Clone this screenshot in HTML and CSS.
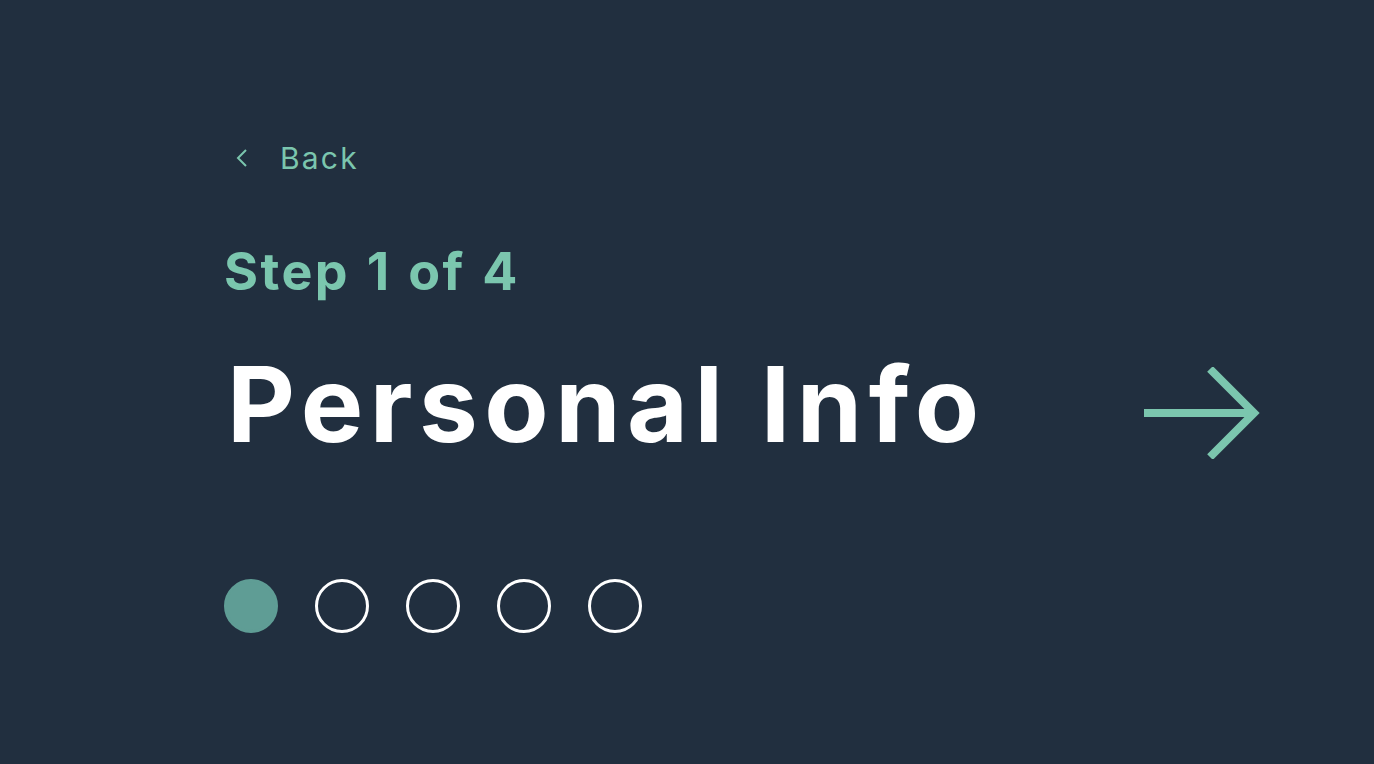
FILE: index.html
```html
<!DOCTYPE html>
<html lang="en">
<head>
<meta charset="utf-8">
<title>Step 1 of 4 - Personal Info</title>
<link rel="stylesheet" href="styles.css">
</head>
<body>
<main class="screen">
  <a class="back" href="#">
    <svg class="back-icon" viewBox="0 0 14 20" width="14" height="20" aria-hidden="true">
      <path d="M11 2 L3 10 L11 18" fill="none" stroke="currentColor" stroke-width="2"/>
    </svg>
    <span class="back-label">Back</span>
  </a>
  <p class="step">Step 1 of 4</p>
  <div class="title-row">
    <h1 class="title">Personal Info</h1>
    <a class="next" href="#" aria-label="Next">
      <svg viewBox="0 0 116 92" width="116" height="92" aria-hidden="true">
        <path d="M0 46 H110" fill="none" stroke="currentColor" stroke-width="8"/>
        <path d="M66 2 L110 46 L66 90" fill="none" stroke="currentColor" stroke-width="8"/>
      </svg>
    </a>
  </div>
  <div class="dots">
    <span class="dot dot-active"></span>
    <span class="dot"></span>
    <span class="dot"></span>
    <span class="dot"></span>
    <span class="dot"></span>
  </div>
</main>
</body>
</html>
```
FILE: styles.css
```css
html, body {
  margin: 0;
  padding: 0;
  height: 100%;
}
body {
  background: #212f3f;
  font-family: "Inter", "Open Sans", sans-serif;
}
.screen {
  box-sizing: border-box;
  height: 764px;
  padding: 140px 114px 0 224px;
  display: flex;
  flex-direction: column;
}
.back {
  display: flex;
  align-items: center;
  gap: 31px;
  color: #7bc6ae;
  text-decoration: none;
  height: 36px;
  padding-left: 11px;
}
.back-icon {
  display: block;
}
.back-label {
  font-size: 30px;
  font-weight: 400;
  line-height: 36px;
  letter-spacing: 2.2px;
}
.step {
  margin: 66px 0 0;
  color: #7bc6ae;
  font-size: 52px;
  font-weight: 700;
  line-height: 60px;
  letter-spacing: 2.4px;
  word-spacing: 2px;
}
.title-row {
  display: flex;
  align-items: center;
  justify-content: space-between;
  margin-top: 47px;
}
.title {
  margin: 0;
  color: #ffffff;
  font-size: 105px;
  font-weight: 700;
  line-height: 110px;
  letter-spacing: 6.5px;
  padding-left: 3px;
}
.next {
  color: #7bc6ae;
  display: block;
  line-height: 0;
  margin-top: 17px;
}
.dots {
  display: flex;
  gap: 37px;
  margin-top: 120px;
}
.dot {
  box-sizing: border-box;
  width: 54px;
  height: 54px;
  border-radius: 50%;
  border: 3px solid #ffffff;
}
.dot-active {
  background: #5f9d95;
  border-color: #5f9d95;
}
```
